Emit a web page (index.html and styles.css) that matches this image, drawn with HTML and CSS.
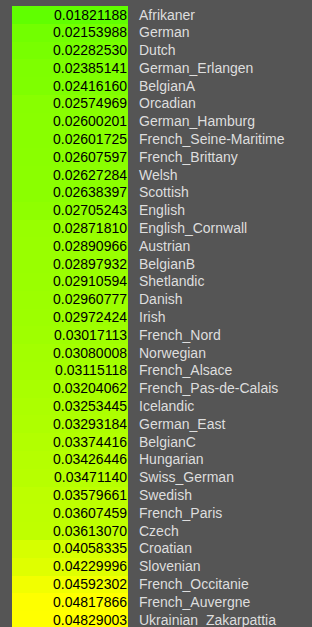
FILE: index.html
```html
<!DOCTYPE html>
<html>
<head>
<meta charset="utf-8">
<link rel="stylesheet" href="styles.css">
</head>
<body>
<div class="list">
<div class="row"><span class="val" style="background:rgb(96,255,0)">0.01821188</span><span class="name">Afrikaner</span></div>
<div class="row"><span class="val" style="background:rgb(114,255,0)">0.02153988</span><span class="name">German</span></div>
<div class="row"><span class="val" style="background:rgb(120,255,0)">0.02282530</span><span class="name">Dutch</span></div>
<div class="row"><span class="val" style="background:rgb(126,255,0)">0.02385141</span><span class="name">German_Erlangen</span></div>
<div class="row"><span class="val" style="background:rgb(127,255,0)">0.02416160</span><span class="name">BelgianA</span></div>
<div class="row"><span class="val" style="background:rgb(136,255,0)">0.02574969</span><span class="name">Orcadian</span></div>
<div class="row"><span class="val" style="background:rgb(137,255,0)">0.02600201</span><span class="name">German_Hamburg</span></div>
<div class="row"><span class="val" style="background:rgb(137,255,0)">0.02601725</span><span class="name">French_Seine-Maritime</span></div>
<div class="row"><span class="val" style="background:rgb(138,255,0)">0.02607597</span><span class="name">French_Brittany</span></div>
<div class="row"><span class="val" style="background:rgb(139,255,0)">0.02627284</span><span class="name">Welsh</span></div>
<div class="row"><span class="val" style="background:rgb(139,255,0)">0.02638397</span><span class="name">Scottish</span></div>
<div class="row"><span class="val" style="background:rgb(143,255,0)">0.02705243</span><span class="name">English</span></div>
<div class="row"><span class="val" style="background:rgb(152,255,0)">0.02871810</span><span class="name">English_Cornwall</span></div>
<div class="row"><span class="val" style="background:rgb(153,255,0)">0.02890966</span><span class="name">Austrian</span></div>
<div class="row"><span class="val" style="background:rgb(153,255,0)">0.02897932</span><span class="name">BelgianB</span></div>
<div class="row"><span class="val" style="background:rgb(154,255,0)">0.02910594</span><span class="name">Shetlandic</span></div>
<div class="row"><span class="val" style="background:rgb(156,255,0)">0.02960777</span><span class="name">Danish</span></div>
<div class="row"><span class="val" style="background:rgb(157,255,0)">0.02972424</span><span class="name">Irish</span></div>
<div class="row"><span class="val" style="background:rgb(159,255,0)">0.03017113</span><span class="name">French_Nord</span></div>
<div class="row"><span class="val" style="background:rgb(163,255,0)">0.03080008</span><span class="name">Norwegian</span></div>
<div class="row"><span class="val" style="background:rgb(164,255,0)">0.03115118</span><span class="name">French_Alsace</span></div>
<div class="row"><span class="val" style="background:rgb(169,255,0)">0.03204062</span><span class="name">French_Pas-de-Calais</span></div>
<div class="row"><span class="val" style="background:rgb(172,255,0)">0.03253445</span><span class="name">Icelandic</span></div>
<div class="row"><span class="val" style="background:rgb(174,255,0)">0.03293184</span><span class="name">German_East</span></div>
<div class="row"><span class="val" style="background:rgb(178,255,0)">0.03374416</span><span class="name">BelgianC</span></div>
<div class="row"><span class="val" style="background:rgb(181,255,0)">0.03426446</span><span class="name">Hungarian</span></div>
<div class="row"><span class="val" style="background:rgb(183,255,0)">0.03471140</span><span class="name">Swiss_German</span></div>
<div class="row"><span class="val" style="background:rgb(189,255,0)">0.03579661</span><span class="name">Swedish</span></div>
<div class="row"><span class="val" style="background:rgb(190,255,0)">0.03607459</span><span class="name">French_Paris</span></div>
<div class="row"><span class="val" style="background:rgb(191,255,0)">0.03613070</span><span class="name">Czech</span></div>
<div class="row"><span class="val" style="background:rgb(214,255,0)">0.04058335</span><span class="name">Croatian</span></div>
<div class="row"><span class="val" style="background:rgb(223,255,0)">0.04229996</span><span class="name">Slovenian</span></div>
<div class="row"><span class="val" style="background:rgb(242,255,0)">0.04592302</span><span class="name">French_Occitanie</span></div>
<div class="row"><span class="val" style="background:rgb(254,255,0)">0.04817866</span><span class="name">French_Auvergne</span></div>
<div class="row"><span class="val" style="background:rgb(255,255,0)">0.04829003</span><span class="name">Ukrainian_Zakarpattia</span></div>
</div>
</body>
</html>
```
FILE: styles.css
```css
html, body {
  margin: 0;
  padding: 0;
  background: #555555;
  overflow: hidden;
}
body {
  font-family: "Liberation Sans", Arial, sans-serif;
  font-size: 14px;
}
.list {
  display: flex;
  flex-direction: column;
  padding: 6px 0 0 12px;
}
.row {
  display: grid;
  grid-template-columns: 116px 1fr;
  column-gap: 11px;
  height: 17.8px;
}
.val,
.name {
  box-sizing: border-box;
  padding-top: 0.5px;
  line-height: 17.3px;
  white-space: nowrap;
}
.val {
  color: #000;
  text-align: right;
  padding-right: 1px;
}
.name {
  color: #dedede;
}
```
